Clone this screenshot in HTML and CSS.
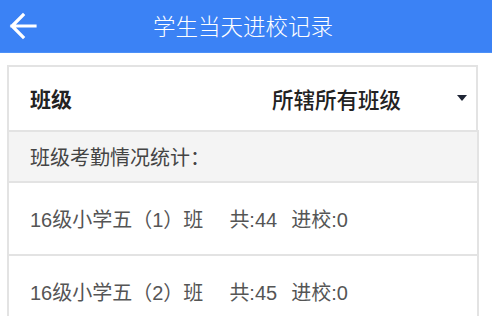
FILE: index.html
```html
<!DOCTYPE html>
<html lang="zh">
<head>
<meta charset="utf-8">
<link rel="stylesheet" href="styles.css">
</head>
<body>
<header class="topbar">
  <span class="back">
    <svg width="30" height="30" viewBox="0 0 30 30"><path d="M27 15H4M15 4L4 15L15 26" fill="none" stroke="#fff" stroke-width="3.2" stroke-linecap="square"/></svg>
  </span>
  <h1 class="title">学生当天进校记录</h1>
</header>
<main class="content">
  <div class="filter">
    <span class="filter-label">班级</span>
    <span class="filter-value">所辖所有班级</span>
    <span class="caret"></span>
  </div>
  <div class="list">
    <div class="section">班级考勤情况统计：</div>
    <div class="row"><span>16级小学五（1）班</span><span class="total">共:44</span><span class="entered">进校:0</span></div>
    <div class="row"><span>16级小学五（2）班</span><span class="total">共:45</span><span class="entered">进校:0</span></div>
  </div>
</main>
</body>
</html>
```
FILE: styles.css
```css
html, body {
  margin: 0;
  padding: 0;
  background: #fff;
  font-family: "Liberation Sans", "Noto Sans CJK SC", sans-serif;
  overflow: hidden;
}
.topbar {
  height: 52px;
  background: #3b82f5;
  border-bottom: 1px solid #4c90f8;
  display: flex;
  align-items: center;
  position: relative;
}
.back {
  width: 30px;
  height: 30px;
  margin-left: 8px;
  display: flex;
}
.title {
  position: absolute;
  left: 0;
  right: 6px;
  top: 0;
  margin: 0;
  text-align: center;
  line-height: 50px;
  font-size: 22.5px;
  font-weight: 300;
  color: #fff;
  pointer-events: none;
  font-family: "Noto Sans CJK SC", sans-serif;
}
.content {
  padding: 12px 0 0 7px;
}
.filter {
  box-sizing: border-box;
  width: 471px;
  height: 65px;
  border: 2px solid #e3e3e3;
  border-bottom: none;
  display: flex;
  align-items: center;
  padding-left: 21px;
  padding-bottom: 1px;
}
.filter-label {
  font-size: 21px;
  font-weight: 700;
  color: #222;
  width: 242px;
}
.filter-value {
  font-size: 21.5px;
  font-weight: 500;
  color: #222;
  flex: 1;
}
.caret {
  width: 0;
  height: 0;
  border-left: 5px solid transparent;
  border-right: 5px solid transparent;
  border-top: 6px solid #1f2535;
  margin-right: 9px;
}
.list {
  box-sizing: border-box;
  width: 472px;
  border-left: 2px solid #e3e3e3;
  border-right: 2px solid #e3e3e3;
}
.section {
  box-sizing: border-box;
  height: 51px;
  border-top: 2px solid #e3e3e3;
  background: #f4f4f4;
  display: flex;
  align-items: center;
  padding-left: 21px;
  font-size: 20px;
  color: #444;
}
.row {
  box-sizing: border-box;
  height: 73px;
  border-top: 2px solid #e3e3e3;
  display: flex;
  align-items: center;
  padding-left: 21px;
  font-size: 20px;
  color: #555;
}
.total {
  margin-left: 26px;
}
.entered {
  margin-left: 14px;
}
```
